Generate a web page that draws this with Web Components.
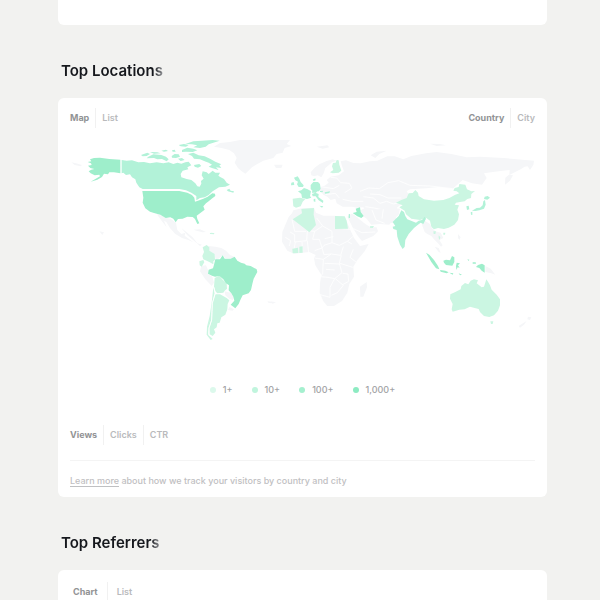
<!DOCTYPE html>
<html lang="en">
<head>
<meta charset="utf-8">
<meta name="viewport" content="width=device-width, initial-scale=1">
<title>Audience analytics</title>
<style>
  body { margin: 0; background: #f2f2f0; font-family: Inter, "Liberation Sans", sans-serif; color: #16181d; }
</style>
</head>
<body>
<analytics-page>
  <panel-card tail></panel-card>
  <panel-section heading="Top Locations">
    <panel-card>
      <tool-row>
        <tab-group items="Map,List" label="Location view"></tab-group>
        <tab-group items="Country,City" label="Location detail"></tab-group>
      </tool-row>
      <world-map></world-map>
      <map-legend></map-legend>
      <tab-group items="Views,Clicks,CTR" label="Metric"></tab-group>
      <card-note><a href="#tracking">Learn more</a> about how we track your visitors by country and city</card-note>
    </panel-card>
  </panel-section>
  <panel-section heading="Top Referrers">
    <panel-card inset>
      <tool-row><tab-group wide items="Chart,List" label="Referrer view"></tab-group></tool-row>
    </panel-card>
  </panel-section>
</analytics-page>
<script>
class Base extends HTMLElement {
  connectedCallback() {
    if (!this.shadowRoot) this.attachShadow({ mode: "open" }).innerHTML = this.view();
  }
}
const define = (name, view) => customElements.define(name, class extends Base { view() { return view(this); } });

define("analytics-page", () => `
<style>
:host { display: flex; flex-direction: column; box-sizing: border-box; height: 100vh; overflow: hidden; padding: 0 53px 0 58px; }
::slotted(*) { flex: none; }
</style><slot></slot>`);

define("panel-section", el => `
<style>
:host { display: block; padding-top: 34px; }
h2 { margin: 0 0 15px 3px; width: max-content; font-size: 15px; line-height: 24px; font-weight: 600;
  color: transparent; background: linear-gradient(90deg, #16181d 91%, #96989b 100%); -webkit-background-clip: text; background-clip: text; }
</style><h2>${el.getAttribute("heading")}</h2><slot></slot>`);

define("panel-card", () => `
<style>
:host { display: flex; flex-direction: column; align-items: stretch; padding: 10px 12px; background: #fff; border-radius: 6px; }
:host([tail]) { padding: 0; height: 25px; border-radius: 0 0 6px 6px; }
:host([inset]) { padding: 12px 15px 20px; }
</style><slot></slot>`);

define("tool-row", () => `
<style>:host { display: flex; justify-content: space-between; }</style><slot></slot>`);

define("tab-group", el => `
<style>
:host { display: flex; }
div { display: flex; }
button { all: unset; box-sizing: border-box; height: 20px; padding: 0 6px; font-size: 9px; line-height: 20px; font-weight: 600; color: #b9babc; cursor: pointer; }
button + button { border-left: 1px solid #f1f1f1; }
button:first-child { padding-left: 0; font-weight: 700; color: #929395; }
button:last-child { padding-right: 0; }
:host([wide]) button:first-child { padding-right: 9px; }
:host([wide]) button:last-child { padding-left: 9px; }
button:focus-visible { outline: 1px solid #8debc2; }
</style>
<div role="tablist" aria-label="${el.getAttribute("label")}">${el.getAttribute("items").split(",").map((t, i) =>
  `<button type="button" role="tab" aria-selected="${i === 0}">${t}</button>`).join("")}</div>`);

define("map-legend", () => `
<style>
:host { display: block; padding: 35px 0 25px; }
ul { display: flex; justify-content: center; gap: 19px; margin: 0; padding: 0; list-style: none; }
li { display: flex; align-items: center; gap: 7px; font-size: 9px; line-height: 20px; font-weight: 500; color: #a2a3a5; }
i { width: 6px; height: 6px; border-radius: 50%; background: var(--dot); }
</style>
<ul>${[["1+", "#dcf9ec"], ["10+", "#c0f5dd"], ["100+", "#a5f0cf"], ["1,000+", "#8debc2"]].map(([t, c]) =>
  `<li><i style="--dot:${c}"></i>${t}</li>`).join("")}</ul>`);

define("card-note", () => `
<style>
:host { display: block; margin: 15px 0 -4px; padding-top: 10px; border-top: 1px solid #f4f4f4; font-size: 9px; line-height: 20px; font-weight: 500; color: #bfc0c2; }
::slotted(a) { color: inherit; text-decoration: underline; text-underline-offset: 2px; }
</style><slot></slot>`);

define("world-map", () => `
<style>
:host { display: block; padding-top: 12px; }
svg { display: block; width: 100%; height: auto; }
.n { fill: #f5f6f8; } .a { fill: #cbf6e2; } .b { fill: #b2f2d8; } .c { fill: #9eeecb; }
path { stroke: none; }
.l { fill: none; stroke: #fff; stroke-width: 2.5; stroke-linejoin: round; }
</style>
<svg viewBox="70 140 465 205" role="img" aria-label="World map of visitors by country">
<g transform="translate(60 130) scale(.33333)">
  <path class="n" d="M462 50L480 39L510 36L540 30L690 30L680 42L694 48L674 54L668 68L650 72L640 84L610 92L588 104L576 112L564 124L556 131L544 123L534 114L524 98L530 84L522 70L508 60L485 54ZM34 97L48 100L66 105L62 109L44 105ZM290 252L304 256L316 263L332 266L348 278L352 300L364 312L376 308L374 317L386 326L400 337L385 330L366 324L345 311L330 294L319 276L312 272L320 292L303 270ZM118 304L132 307L127 315Z"/>
  <path class="c" d="M90 88L102 84L120 83L148 87L181 89V130L162 127L148 127L144 133L132 131L126 141L112 149L92 155L106 147L120 139L118 134L104 136L92 130L86 124L94 119L103 117L91 114L84 107L95 105L93 100L83 96L94 94Z"/>
  <path class="b" d="M185 90L200 92L216 91L235 97L252 96L270 100L290 97L310 100L326 97L340 102L352 98L364 101L376 97L386 95L394 106L382 112L385 118L368 122L362 132L364 142L380 147L394 150L406 160L412 169L419 170L424 161L423 153L431 146L425 136L428 124L440 127L446 132L458 122L466 128L480 128L475 137L482 142L492 147L500 158L510 164L496 170L477 172L458 184L445 196L434 202L420 204L409 211L409 198L394 188L378 181L358 177L248 177L238 172L229 158L226 148L216 142L210 133L198 135L190 128L185 130ZM243 75L262 68L270 72L260 78L248 79ZM265 80L280 73L304 75L318 80L326 88L320 94L306 87L292 88L282 84L260 85ZM270 66L292 67L302 70L282 71ZM335 78L344 72L356 73L360 80L348 84L336 83ZM354 86L366 84L374 90L362 93ZM356 45L372 42L386 45L378 50L362 49ZM366 60L382 53L400 56L412 61L398 66L378 65L366 66ZM376 42L400 34L426 32L458 30L479 32L460 38L446 43L437 50L420 54L400 52L412 46L396 43ZM384 72L400 68L416 76L434 79L450 86L466 95L484 103L478 106L484 114L468 112L476 120L458 115L446 110L456 104L446 98L434 94L420 88L402 86L396 78ZM402 105L418 102L424 108L414 113L404 110ZM304 62L318 59L324 63L312 65ZM336 61L344 59L347 65L338 65ZM500 180L508 176L512 182L522 184L520 188L504 184Z"/>
  <path class="c" d="M247 183L358 183L382 188L396 195L403 203L405 215L418 211L430 206L443 200L457 190L465 191L466 198L455 206L446 214L438 220L430 229L434 239L422 248L410 257L412 267L418 280L412 282L405 267L398 261L382 260L368 266L354 267L347 277L340 266L331 262L317 264L301 254L282 249L270 245L256 235L248 218L250 203Z"/>
  <path class="a" d="M449 309L463 309L462 313L451 312Z"/>
  <path class="n" d="M400 299L420 298L438 306L428 307L410 302Z"/>
</g>
<g transform="translate(190 230) scale(.33333)">
  <path class="n" d="M-26 -6L-8 8L8 22L22 40L36 44L30 48L12 32L-8 16ZM56 48L76 50L94 54L108 62L120 75L133 80L128 86L105 84L98 76L88 84L78 93L74 74L56 67ZM34 108L48 106L55 122L54 132L67 140L72 158L65 168L46 148L30 124ZM104 184L122 188L131 200L129 210L118 206L106 196ZM118 231L132 238L128 242L114 240ZM232 214L254 216L250 220L236 219Z"/>
  <path class="a" d="M38 52L50 45L58 52L58 62L74 72L75 90L70 94L70 103L58 96L40 88L37 78L42 66ZM28 94L40 90L43 97L35 110L29 106ZM60 9L67 8L68 12L60 12ZM74 144L88 137L98 149L110 160L111 176L104 182L100 188L82 190L76 184L72 170ZM76 193L90 193L110 204L118 211L113 222L112 238L106 254L94 262L89 278L82 280L80 292L72 298L76 308L68 318L59 313L58 294L66 270L67 240L68 218ZM70 172L74 190L66 220L65 244L64 270L56 294L55 315L68 327L62 330L50 314L51 290L59 258L65 218L68 190Z"/>
  <path class="l" d="M72 172L76 190L67 220L66 244L65 270L57 294L56 313"/>
  <path class="c" d="M76 88L90 88L98 76L104 86L122 86L134 80L142 92L153 98L164 101L169 106L182 108L200 118L202 126L191 146L187 162L183 180L176 190L158 196L151 210L146 222L136 235L128 229L122 224L133 212L130 200L124 190L116 181L117 166L108 160L100 148L88 138L75 140L66 137L54 131L56 119L69 115L72 104Z"/>
</g>
<g transform="translate(270 130) scale(.33333)">
  <path class="n" d="M140 50L172 46L178 52L158 56ZM12 104L38 104L34 114L18 114ZM122 127L134 113L148 103L168 94L188 88L200 92L186 97L177 105L166 114L161 130L154 142L143 136L132 139L124 136ZM212 94L228 91L250 99L272 100L300 94L322 92L352 79L374 79L400 88L424 78L468 70L500 66L544 72L590 82L630 80L700 84L792 92L790 106L764 110L752 118L718 135L719 120L698 122L674 125L642 130L650 144L636 164L606 160L578 150L548 176L505 171L468 175L420 178L410 184L420 200L398 218L380 234L388 248L370 262L366 276L354 274L340 266L320 262L302 262L292 252L280 232L262 233L246 230L218 230L200 220L196 206L182 210L172 200L160 194L149 180L152 170L164 167L176 158L170 150L182 140L206 136L222 124L216 108Z"/>
  <path class="l" d="M182 142L200 144L212 158L238 160L246 174L224 188M152 170L190 176L208 166M166 194L196 190L208 204M270 184L296 174L328 176L354 158L386 152L420 166L480 168L548 176M280 200L310 204L330 220L350 214L370 222L398 216M300 192L330 194L354 204L394 204M286 230L312 234L340 240L356 256M218 208L246 214L280 214"/>
  <path class="n" d="M302 76L320 65L350 62L328 72L316 84ZM480 41L510 42L528 46L500 48ZM780 120L790 105L772 107Z"/>
  <path class="a" d="M180 127L190 120L186 109L189 99L197 98L200 90L206 91L208 104L214 122L206 128L188 130ZM68 206L90 203L106 207L98 215L92 229L78 233L70 229Z"/>
  <path class="b" d="M72 143L83 139L88 146L92 156L101 166L99 171L86 171L81 163L84 155L76 151ZM64 158L71 156L73 165L63 166ZM84 184L94 181L102 174L113 178L123 184L120 198L124 203L111 207L96 203L94 192ZM122 165L130 156L144 156L150 162L152 176L147 184L130 185L122 177ZM128 149L136 145L137 151L131 153ZM126 192L136 188L146 192L145 201L160 212L159 219L146 211L137 199L128 199ZM148 227L160 229L156 233ZM131 207L136 206L136 216L131 214ZM126 184L142 184L138 188L126 188ZM150 183L160 182L157 187L150 186ZM164 187L180 184L178 189L165 191Z"/>
</g>
<g transform="translate(270 200) scale(.33333)">
  <path class="n" d="M56 51L66 40L70 31L96 25L132 23L138 38L160 47L194 47L224 50L240 88L252 114L270 138L296 132L284 154L262 180L250 200L252 230L238 252L232 278L216 303L192 318L172 318L160 304L149 278L150 250L154 224L136 196L132 175L137 165L118 156L98 158L72 161L52 152L36 125L37 96ZM232 50L244 41L252 44L268 58L286 72L302 82L320 82L324 94L310 108L276 123L262 106L250 86L240 66ZM262 36L280 26L320 30L348 22L390 26L386 44L368 60L358 74L330 72L304 74L290 56ZM270 260L290 246L291 262L280 290L271 290ZM2 305L18 306L8 311Z"/>
  <path class="l" d="M66 58L74 94L108 94M60 96L74 104L74 126L110 122L112 92L134 94L158 78L140 54M46 112L62 122L58 138M112 122L116 158M134 94L128 118L148 118L156 144L134 152M158 78L186 94L186 128L162 136L156 144M194 84L240 88M186 128L208 136L232 124L246 132M156 144L162 164L184 162L212 166L220 140M134 174L160 178L158 220L152 230M160 178L184 162M214 166L208 190L216 218L194 236L174 232L152 230M210 190L248 202M194 236L180 262L180 292L150 284M196 236L220 256L202 278L184 286M218 220L234 222L236 244L218 254M232 124L248 110M250 148L240 172L258 186M250 86L276 98L316 96M306 30L318 60L344 70M340 28L336 56M164 116L190 110M96 126L98 154M76 126L70 158M164 190L208 192M168 208L194 210"/>
  <path class="a" d="M68 58L96 40L94 27L132 24L131 44L138 75L118 97L106 87ZM195 48L224 49L230 62L234 86L195 87ZM67 146L84 143L85 159L68 160ZM88 140L98 139L98 158L88 159ZM300 79L312 78L308 84L300 83Z"/>
  <path class="c" d="M257 26L270 22L272 36L281 48L274 54L262 49L248 39L260 36Z"/>
  <path class="b" d="M236 43L240 42L240 54L236 54Z"/>
</g>
<g transform="translate(390 130) scale(.33333)">
  <path class="a" d="M18 218L34 210L40 208L50 204L56 190L68 189L76 180L84 188L86 198L102 208L132 212L160 210L178 204L196 194L208 190L200 184L190 182L194 174L206 171L208 162L226 164L231 178L244 184L255 183L244 192L243 204L232 207L224 214L210 216L198 218L194 224L207 226L202 239L207 253L204 270L193 284L176 293L162 297L144 294L132 298L124 291L120 272L108 263L90 270L64 266L48 253L44 242L28 232L38 226Z"/>
  <path class="n" d="M0 260L14 256L20 266L8 278L0 280ZM346 143L357 134L369 136L360 152L345 164Z"/>
  <path class="b" d="M284 200L293 198L300 203L292 209L282 207ZM280 214L285 210L287 224L282 236L268 241L256 243L246 242L260 234L270 233L278 226ZM229 229L236 227L238 238L231 240ZM242 247L247 245L247 255L243 254Z"/>
</g>
<g transform="translate(390 220) scale(.33333)">
  <path class="n" d="M94 6L104 2L120 12L126 24L136 34L152 38L160 54L148 60L158 76L153 80L144 70L132 58L124 48L112 42L104 36L98 20ZM134 80L146 84L152 98L146 96ZM286 138L302 146L316 164L304 160L286 156ZM414 290L424 292L420 300L412 298ZM410 303L402 314L390 323L386 318L400 309ZM204 42L212 52L208 60L204 54Z"/>
  <path class="b" d="M26 -12L34 -29L42 -24L46 -12L52 -2L78 8L86 2L96 0L104 -10L108 -4L100 12L92 8L82 16L72 24L56 42L46 60L44 80L38 87L30 74L22 50L20 30L10 27L8 20L16 18L8 6L16 -2Z"/>
  <path class="c" d="M108 98L118 104L132 120L144 138L148 148L138 145L124 126ZM160 122L168 119L180 121L186 108L193 112L193 126L187 137L168 135L162 128ZM150 150L166 152L176 157L170 160L152 155ZM200 128L210 130L204 136L209 143L203 142L199 150L198 138ZM264 135L276 131L284 136L284 158L275 152L268 144L258 141ZM248 127L257 127L258 131L248 131ZM232 118L238 119L236 123ZM178 158L190 160L188 164ZM206 160L216 164L210 166Z"/>
  <path class="a" d="M130 34L138 34L136 42L131 42ZM146 46L151 52L149 60L146 54ZM160 38L166 38L165 44L160 44ZM181 223L196 216L212 208L214 198L225 189L235 193L242 182L252 178L264 181L260 190L275 202L282 200L289 178L294 185L300 196L305 209L320 224L330 238L330 256L324 272L312 286L298 291L282 288L270 276L266 267L254 264L240 260L224 268L208 269L188 275L185 268L188 252L180 236ZM301 304L310 304L308 312L303 312Z"/>
</g>
</svg>`);
</script>
</body>
</html>
